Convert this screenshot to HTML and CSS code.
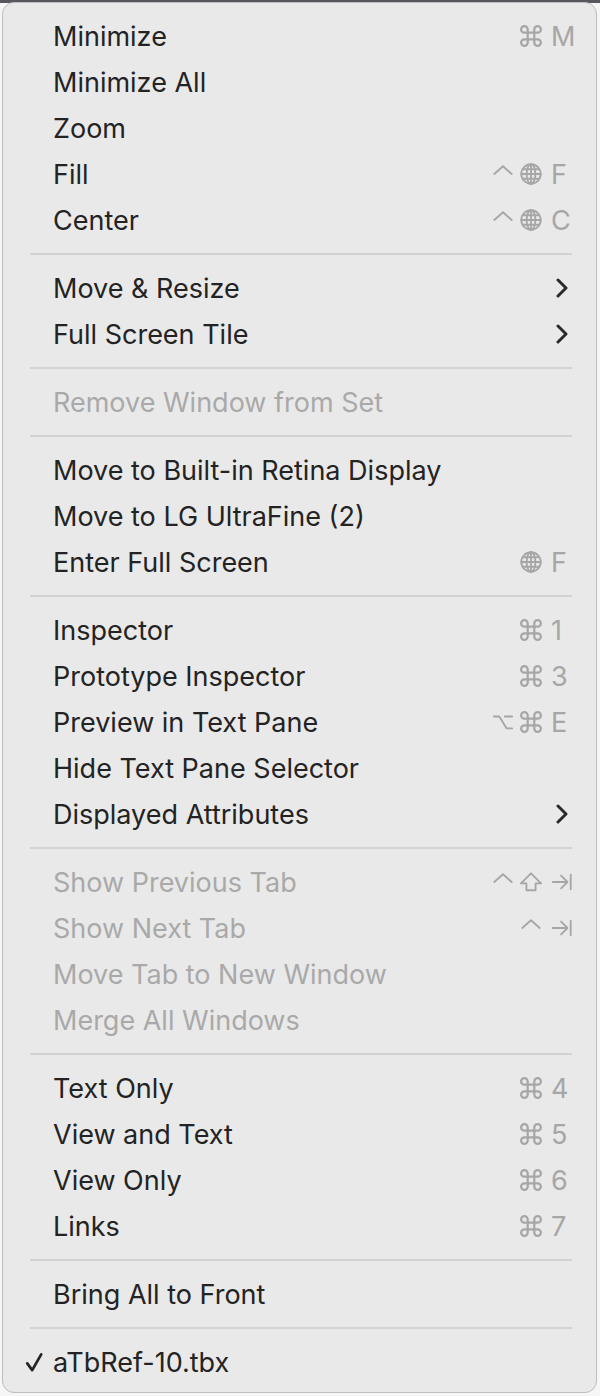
FILE: index.html
```html
<!DOCTYPE html>
<html lang="en">
<head>
  <meta charset="UTF-8">
  <title>Window Menu</title>
  <link rel="stylesheet" href="styles.css">
</head>
<body>

  <svg width="0" height="0" class="defs">
    <defs>
      <symbol id="cmd" viewBox="2 2 20 20"><path d="M15 6v12a3 3 0 1 0 3-3H6a3 3 0 1 0 3 3V6a3 3 0 1 0-3 3h12a3 3 0 1 0-3-3"/></symbol>
      <symbol id="ctrl" viewBox="0 0 24 24"><polyline points="2.5 12 12 3.5 21.5 12"/></symbol>
      <symbol id="opt" viewBox="0 0 24 24"><path d="M2 6h6l8 13h6M14 6h8"/></symbol>
      <symbol id="shift" viewBox="0 0 24 24"><path d="M12 2.5 1 13.5h6V21h10v-7.5h6z"/></symbol>
      <symbol id="tab" viewBox="0 0 24 24"><path d="M2 12h16M11 5l7 7-7 7M21.5 4v16"/></symbol>
      <symbol id="globe" viewBox="0 0 24 24"><circle cx="12" cy="12" r="10.6"/><ellipse cx="12" cy="12" rx="4.8" ry="10.6"/><path d="M12 1.4v21.2M1.4 12h21.2M3.2 6.8h17.6M3.2 17.2h17.6"/></symbol>
    </defs>
  </svg>

  <div class="desk">
    <div class="menu">

      <div class="item"><span></span><span class="label">Minimize</span>
        <span class="mods"><svg class="mod"><use href="#cmd"/></svg></span><span class="key">M</span></div>
      <div class="item"><span></span><span class="label">Minimize All</span></div>
      <div class="item"><span></span><span class="label">Zoom</span></div>
      <div class="item"><span></span><span class="label">Fill</span>
        <span class="mods"><svg class="mod"><use href="#ctrl"/></svg><svg class="mod"><use href="#globe"/></svg></span><span class="key">F</span></div>
      <div class="item"><span></span><span class="label">Center</span>
        <span class="mods"><svg class="mod"><use href="#ctrl"/></svg><svg class="mod"><use href="#globe"/></svg></span><span class="key">C</span></div>

      <div class="sep"></div>

      <div class="item"><span></span><span class="label">Move &amp; Resize</span>
        <span class="mods"></span><span class="key"><svg class="arrow" viewBox="0 0 12 20"><polyline points="2 2 10 10 2 18"/></svg></span></div>
      <div class="item"><span></span><span class="label">Full Screen Tile</span>
        <span class="mods"></span><span class="key"><svg class="arrow" viewBox="0 0 12 20"><polyline points="2 2 10 10 2 18"/></svg></span></div>

      <div class="sep"></div>

      <div class="item disabled"><span></span><span class="label">Remove Window from Set</span></div>

      <div class="sep"></div>

      <div class="item"><span></span><span class="label">Move to Built-in Retina Display</span></div>
      <div class="item"><span></span><span class="label">Move to LG UltraFine (2)</span></div>
      <div class="item"><span></span><span class="label">Enter Full Screen</span>
        <span class="mods"><svg class="mod"><use href="#globe"/></svg></span><span class="key">F</span></div>

      <div class="sep"></div>

      <div class="item"><span></span><span class="label">Inspector</span>
        <span class="mods"><svg class="mod"><use href="#cmd"/></svg></span><span class="key">1</span></div>
      <div class="item"><span></span><span class="label">Prototype Inspector</span>
        <span class="mods"><svg class="mod"><use href="#cmd"/></svg></span><span class="key">3</span></div>
      <div class="item"><span></span><span class="label">Preview in Text Pane</span>
        <span class="mods"><svg class="mod"><use href="#opt"/></svg><svg class="mod"><use href="#cmd"/></svg></span><span class="key">E</span></div>
      <div class="item"><span></span><span class="label">Hide Text Pane Selector</span></div>
      <div class="item"><span></span><span class="label">Displayed Attributes</span>
        <span class="mods"></span><span class="key"><svg class="arrow" viewBox="0 0 12 20"><polyline points="2 2 10 10 2 18"/></svg></span></div>

      <div class="sep"></div>

      <div class="item disabled"><span></span><span class="label">Show Previous Tab</span>
        <span class="mods"><svg class="mod"><use href="#ctrl"/></svg><svg class="mod"><use href="#shift"/></svg></span><span class="key"><svg class="mod"><use href="#tab"/></svg></span></div>
      <div class="item disabled"><span></span><span class="label">Show Next Tab</span>
        <span class="mods"><svg class="mod"><use href="#ctrl"/></svg></span><span class="key"><svg class="mod"><use href="#tab"/></svg></span></div>
      <div class="item disabled"><span></span><span class="label">Move Tab to New Window</span></div>
      <div class="item disabled"><span></span><span class="label">Merge All Windows</span></div>

      <div class="sep"></div>

      <div class="item"><span></span><span class="label">Text Only</span>
        <span class="mods"><svg class="mod"><use href="#cmd"/></svg></span><span class="key">4</span></div>
      <div class="item"><span></span><span class="label">View and Text</span>
        <span class="mods"><svg class="mod"><use href="#cmd"/></svg></span><span class="key">5</span></div>
      <div class="item"><span></span><span class="label">View Only</span>
        <span class="mods"><svg class="mod"><use href="#cmd"/></svg></span><span class="key">6</span></div>
      <div class="item"><span></span><span class="label">Links</span>
        <span class="mods"><svg class="mod"><use href="#cmd"/></svg></span><span class="key">7</span></div>

      <div class="sep"></div>

      <div class="item"><span></span><span class="label">Bring All to Front</span></div>

      <div class="sep"></div>

      <div class="item"><span class="check"><svg viewBox="0 0 20 22"><path d="M2.5 12.5 8 20 18 2.5"/></svg></span><span class="label">aTbRef-10.tbx</span></div>

    </div>
  </div>

</body>
</html>
```

FILE: styles.css
```css
body {
  margin: 0;
  background-color: #f6f6f6;
  font-family: "Inter", "Noto Sans", sans-serif;
}
.defs {
  position: absolute;
}
.desk {
  min-height: 1396px;
  box-sizing: border-box;
  padding: 2px 3px 0 2px;
  background: linear-gradient(#57575d 0, #57575d 3px, #f6f6f6 3px);
}
.menu {
  background-color: #e9e9e9;
  border: 1px solid #bdbdbd;
  border-radius: 12px;
  padding: 10px 0 7px;
}
.item {
  display: grid;
  grid-template-columns: 50px 1fr auto 25px;
  align-items: center;
  height: 46px;
  padding-right: 20px;
  font-size: 27px;
  color: #232323;
}
.item.disabled {
  color: #a9a9a9;
}
.label {
  white-space: nowrap;
}
.mods {
  display: flex;
  align-items: center;
  gap: 6px;
  margin-right: 9px;
}
.mod {
  width: 22px;
  height: 22px;
  fill: none;
  stroke: #a6a6a6;
  stroke-width: 2;
  stroke-linecap: round;
  stroke-linejoin: round;
  display: block;
}
.key {
  display: flex;
  align-items: center;
  color: #a6a6a6;
}
.arrow {
  width: 12px;
  height: 20px;
  margin-left: 5px;
  fill: none;
  stroke: #2a2a2a;
  stroke-width: 3;
  stroke-linecap: round;
  stroke-linejoin: round;
}
.check {
  display: flex;
  justify-content: flex-end;
  padding-right: 10px;
}
.check svg {
  width: 18px;
  height: 20px;
  fill: none;
  stroke: #232323;
  stroke-width: 3;
  stroke-linecap: round;
  stroke-linejoin: round;
}
.sep {
  height: 2px;
  margin: 10px 24px 10px 27px;
  background-color: #d2d2d2;
}
```
